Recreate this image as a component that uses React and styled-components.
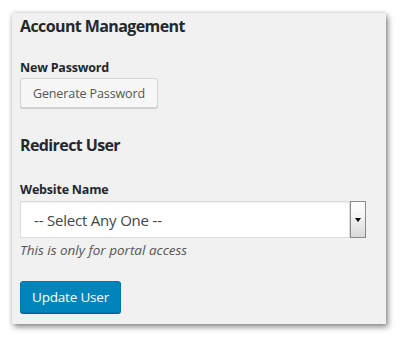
import React, { useState } from "react";
import styled, { createGlobalStyle } from "styled-components";

const Global = createGlobalStyle`
  html, body {
    margin: 0;
    padding: 0;
    background: #ffffff;
  }
  body {
    width: 400px;
    height: 337px;
    overflow: hidden;
    font-family: "Open Sans", "Noto Sans", sans-serif;
  }
`;

function App() {
  const [site, setSite] = useState("");

  return (
    <Page>
      <Global />
      <Panel>
        <Heading>Account Management</Heading>
        <Label $top={23}>New Password</Label>
        <PlainButton type="button">Generate Password</PlainButton>

        <Heading $top={26}>Redirect User</Heading>
        <Label $top={26}>Website Name</Label>
        <SelectBox>
          <SelectValue>{site || "-- Select Any One --"}</SelectValue>
          <Arrow onClick={() => setSite("")}>
            <ArrowTip />
          </Arrow>
        </SelectBox>
        <Hint>This is only for portal access</Hint>

        <PrimaryButton type="button">Update User</PrimaryButton>
      </Panel>
    </Page>
  );
}

export default App;

const Page = styled.div`
  padding: 13px 14px 13px 12px;
`;
const Panel = styled.div`
  background: #f1f1f1;
  width: 374px;
  height: 311px;
  box-sizing: border-box;
  padding: 2px 20px 0 8px;
  display: flex;
  flex-direction: column;
  align-items: flex-start;
  box-shadow: 2px 3px 6px rgba(0, 0, 0, 0.45), 0 0 4px rgba(0, 0, 0, 0.15);
`;
const Heading = styled.h2`
  margin: ${(p) => p.$top || 0}px 0 0 0;
  font-size: 16px;
  font-weight: 700;
  color: #23282d;
  line-height: 22px;
  letter-spacing: -0.6px;
`;
const Label = styled.div`
  margin-top: ${(p) => p.$top}px;
  font-size: 12.5px;
  font-weight: 700;
  color: #23282d;
  line-height: 16px;
  letter-spacing: -0.2px;
`;
const PlainButton = styled.button`
  margin-top: 2px;
  height: 30px;
  width: 138px;
  padding: 0;
  border: 1px solid #d4d4d4;
  border-radius: 3px;
  background: #f7f7f7;
  box-shadow: 0 1px 0 #cccccc;
  color: #555555;
  font-family: inherit;
  font-size: 12.5px;
  letter-spacing: -0.1px;
`;
const SelectBox = styled.div`
  margin-top: 3px;
  width: 346px;
  height: 37px;
  display: flex;
  align-items: stretch;
  box-sizing: border-box;
`;
const SelectValue = styled.div`
  flex: 1;
  background: #ffffff;
  border: 1px solid #dddddd;
  box-shadow: inset 0 1px 2px rgba(0, 0, 0, 0.07);
  display: flex;
  align-items: center;
  padding-left: 13px;
  font-size: 15px;
  color: #444444;
  letter-spacing: -0.2px;
`;
const Arrow = styled.div`
  width: 16px;
  box-sizing: border-box;
  border: 1px solid #8a8a8a;
  background: linear-gradient(#ffffff, #f4f4f4 40%, #d9d9d9);
  display: flex;
  align-items: center;
  justify-content: center;
`;
const ArrowTip = styled.span`
  width: 0;
  height: 0;
  border-left: 3.5px solid transparent;
  border-right: 3.5px solid transparent;
  border-top: 4px solid #000000;
`;
const Hint = styled.div`
  margin-top: 4px;
  font-size: 13.5px;
  font-style: italic;
  color: #555555;
  line-height: 17px;
  letter-spacing: 0;
`;
const PrimaryButton = styled.button`
  margin-top: 22px;
  height: 32px;
  width: 101px;
  padding: 0;
  border: 1px solid #0073aa;
  border-radius: 3px;
  background: #0085ba;
  box-shadow: 0 1px 0 #006799;
  color: #ffffff;
  font-family: inherit;
  font-size: 13.5px;
  letter-spacing: -0.2px;
`;
